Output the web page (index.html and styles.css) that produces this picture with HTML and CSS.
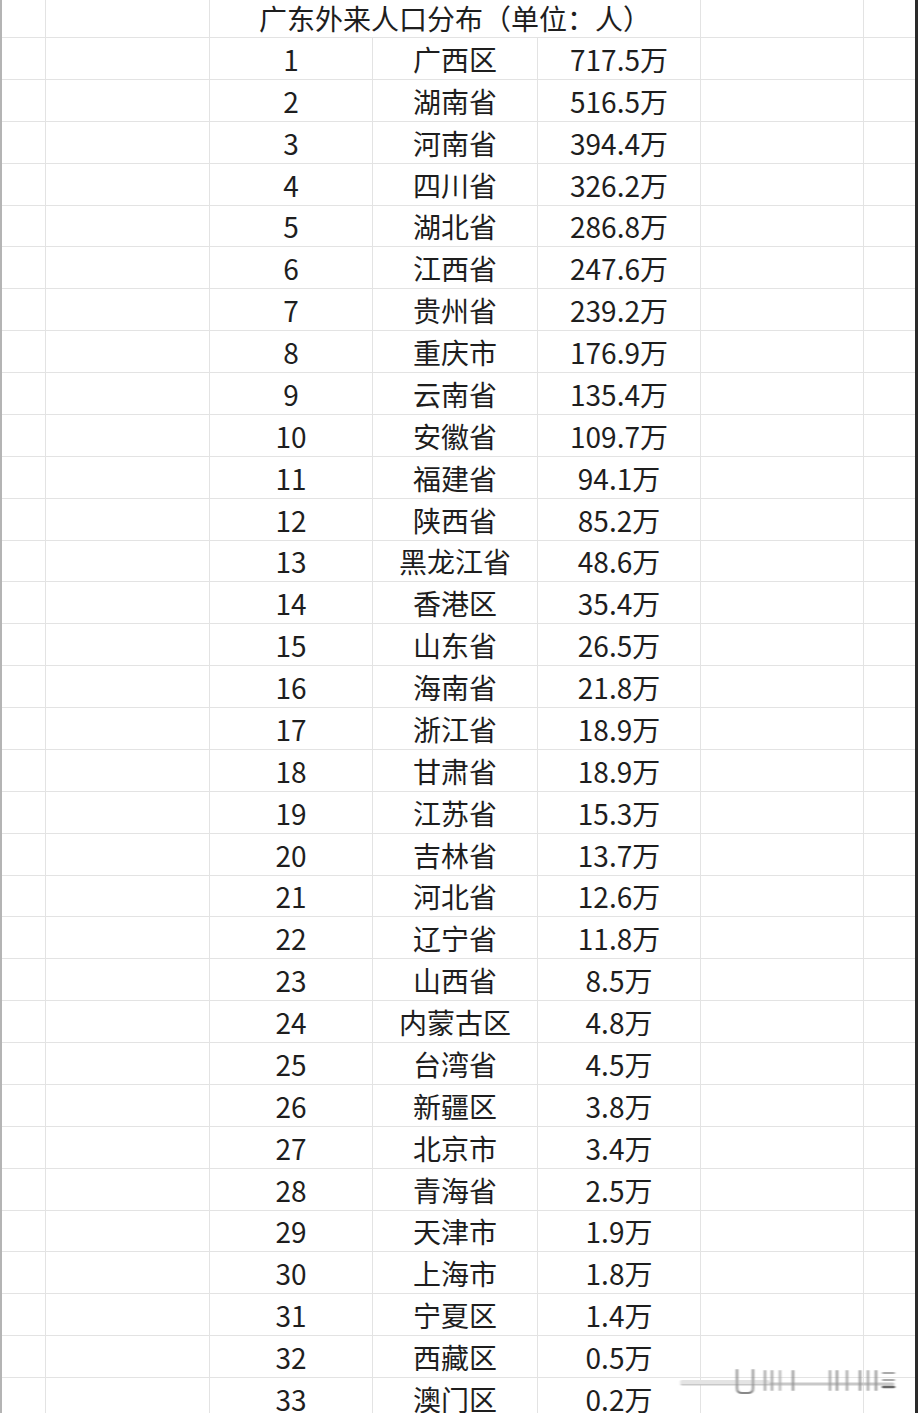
FILE: index.html
```html
<!DOCTYPE html>
<html lang="zh">
<head>
<meta charset="utf-8">
<title>广东外来人口分布</title>
<link rel="stylesheet" href="styles.css">
</head>
<body>
<div class="page">
  <div class="sheet">
    <div class="row title-row">
      <div class="cell"></div>
      <div class="cell"></div>
      <div class="cell title">广东外来人口分布（单位：人）</div>
      <div class="cell"></div>
      <div class="cell last"></div>
    </div>
    <div class="row"><div class="cell"></div><div class="cell"></div><div class="cell">1</div><div class="cell">广西区</div><div class="cell">717.5万</div><div class="cell"></div><div class="cell last"></div></div>
    <div class="row"><div class="cell"></div><div class="cell"></div><div class="cell">2</div><div class="cell">湖南省</div><div class="cell">516.5万</div><div class="cell"></div><div class="cell last"></div></div>
    <div class="row"><div class="cell"></div><div class="cell"></div><div class="cell">3</div><div class="cell">河南省</div><div class="cell">394.4万</div><div class="cell"></div><div class="cell last"></div></div>
    <div class="row"><div class="cell"></div><div class="cell"></div><div class="cell">4</div><div class="cell">四川省</div><div class="cell">326.2万</div><div class="cell"></div><div class="cell last"></div></div>
    <div class="row"><div class="cell"></div><div class="cell"></div><div class="cell">5</div><div class="cell">湖北省</div><div class="cell">286.8万</div><div class="cell"></div><div class="cell last"></div></div>
    <div class="row"><div class="cell"></div><div class="cell"></div><div class="cell">6</div><div class="cell">江西省</div><div class="cell">247.6万</div><div class="cell"></div><div class="cell last"></div></div>
    <div class="row"><div class="cell"></div><div class="cell"></div><div class="cell">7</div><div class="cell">贵州省</div><div class="cell">239.2万</div><div class="cell"></div><div class="cell last"></div></div>
    <div class="row"><div class="cell"></div><div class="cell"></div><div class="cell">8</div><div class="cell">重庆市</div><div class="cell">176.9万</div><div class="cell"></div><div class="cell last"></div></div>
    <div class="row"><div class="cell"></div><div class="cell"></div><div class="cell">9</div><div class="cell">云南省</div><div class="cell">135.4万</div><div class="cell"></div><div class="cell last"></div></div>
    <div class="row"><div class="cell"></div><div class="cell"></div><div class="cell">10</div><div class="cell">安徽省</div><div class="cell">109.7万</div><div class="cell"></div><div class="cell last"></div></div>
    <div class="row"><div class="cell"></div><div class="cell"></div><div class="cell">11</div><div class="cell">福建省</div><div class="cell">94.1万</div><div class="cell"></div><div class="cell last"></div></div>
    <div class="row"><div class="cell"></div><div class="cell"></div><div class="cell">12</div><div class="cell">陕西省</div><div class="cell">85.2万</div><div class="cell"></div><div class="cell last"></div></div>
    <div class="row"><div class="cell"></div><div class="cell"></div><div class="cell">13</div><div class="cell">黑龙江省</div><div class="cell">48.6万</div><div class="cell"></div><div class="cell last"></div></div>
    <div class="row"><div class="cell"></div><div class="cell"></div><div class="cell">14</div><div class="cell">香港区</div><div class="cell">35.4万</div><div class="cell"></div><div class="cell last"></div></div>
    <div class="row"><div class="cell"></div><div class="cell"></div><div class="cell">15</div><div class="cell">山东省</div><div class="cell">26.5万</div><div class="cell"></div><div class="cell last"></div></div>
    <div class="row"><div class="cell"></div><div class="cell"></div><div class="cell">16</div><div class="cell">海南省</div><div class="cell">21.8万</div><div class="cell"></div><div class="cell last"></div></div>
    <div class="row"><div class="cell"></div><div class="cell"></div><div class="cell">17</div><div class="cell">浙江省</div><div class="cell">18.9万</div><div class="cell"></div><div class="cell last"></div></div>
    <div class="row"><div class="cell"></div><div class="cell"></div><div class="cell">18</div><div class="cell">甘肃省</div><div class="cell">18.9万</div><div class="cell"></div><div class="cell last"></div></div>
    <div class="row"><div class="cell"></div><div class="cell"></div><div class="cell">19</div><div class="cell">江苏省</div><div class="cell">15.3万</div><div class="cell"></div><div class="cell last"></div></div>
    <div class="row"><div class="cell"></div><div class="cell"></div><div class="cell">20</div><div class="cell">吉林省</div><div class="cell">13.7万</div><div class="cell"></div><div class="cell last"></div></div>
    <div class="row"><div class="cell"></div><div class="cell"></div><div class="cell">21</div><div class="cell">河北省</div><div class="cell">12.6万</div><div class="cell"></div><div class="cell last"></div></div>
    <div class="row"><div class="cell"></div><div class="cell"></div><div class="cell">22</div><div class="cell">辽宁省</div><div class="cell">11.8万</div><div class="cell"></div><div class="cell last"></div></div>
    <div class="row"><div class="cell"></div><div class="cell"></div><div class="cell">23</div><div class="cell">山西省</div><div class="cell">8.5万</div><div class="cell"></div><div class="cell last"></div></div>
    <div class="row"><div class="cell"></div><div class="cell"></div><div class="cell">24</div><div class="cell">内蒙古区</div><div class="cell">4.8万</div><div class="cell"></div><div class="cell last"></div></div>
    <div class="row"><div class="cell"></div><div class="cell"></div><div class="cell">25</div><div class="cell">台湾省</div><div class="cell">4.5万</div><div class="cell"></div><div class="cell last"></div></div>
    <div class="row"><div class="cell"></div><div class="cell"></div><div class="cell">26</div><div class="cell">新疆区</div><div class="cell">3.8万</div><div class="cell"></div><div class="cell last"></div></div>
    <div class="row"><div class="cell"></div><div class="cell"></div><div class="cell">27</div><div class="cell">北京市</div><div class="cell">3.4万</div><div class="cell"></div><div class="cell last"></div></div>
    <div class="row"><div class="cell"></div><div class="cell"></div><div class="cell">28</div><div class="cell">青海省</div><div class="cell">2.5万</div><div class="cell"></div><div class="cell last"></div></div>
    <div class="row"><div class="cell"></div><div class="cell"></div><div class="cell">29</div><div class="cell">天津市</div><div class="cell">1.9万</div><div class="cell"></div><div class="cell last"></div></div>
    <div class="row"><div class="cell"></div><div class="cell"></div><div class="cell">30</div><div class="cell">上海市</div><div class="cell">1.8万</div><div class="cell"></div><div class="cell last"></div></div>
    <div class="row"><div class="cell"></div><div class="cell"></div><div class="cell">31</div><div class="cell">宁夏区</div><div class="cell">1.4万</div><div class="cell"></div><div class="cell last"></div></div>
    <div class="row"><div class="cell"></div><div class="cell"></div><div class="cell">32</div><div class="cell">西藏区</div><div class="cell">0.5万</div><div class="cell"></div><div class="cell last"></div></div>
    <div class="row"><div class="cell"></div><div class="cell"></div><div class="cell">33</div><div class="cell">澳门区</div><div class="cell">0.2万</div><div class="cell"></div><div class="cell last"></div></div>
  </div>
  <svg class="watermark" width="230" height="34" viewBox="0 0 230 34" xmlns="http://www.w3.org/2000/svg">
    <defs>
      <filter id="blur" x="-10%" y="-50%" width="120%" height="200%">
        <feGaussianBlur stdDeviation="1.2 0.7"/>
      </filter>
    </defs>
    <g filter="url(#blur)" stroke-linecap="round" fill="none">
      <line x1="4" y1="18" x2="215" y2="18" stroke="#c8c8c8" stroke-width="3"/>
      <line x1="4" y1="16" x2="90" y2="16" stroke="#e4e4e4" stroke-width="4"/>
      <path d="M59 4 V22 Q59 27 64 27 H70 Q75 27 75 22 V4" stroke="#888" stroke-width="2"/>
      <line x1="87" y1="5" x2="87" y2="24" stroke="#999" stroke-width="2"/>
      <line x1="94" y1="5" x2="94" y2="24" stroke="#999" stroke-width="2"/>
      <line x1="102" y1="5" x2="102" y2="24" stroke="#aaa" stroke-width="2"/>
      <line x1="115" y1="5" x2="115" y2="24" stroke="#888" stroke-width="2"/>
      <line x1="152" y1="5" x2="152" y2="24" stroke="#999" stroke-width="2"/>
      <line x1="159" y1="5" x2="159" y2="24" stroke="#888" stroke-width="2"/>
      <line x1="169" y1="5" x2="169" y2="24" stroke="#999" stroke-width="2"/>
      <line x1="182" y1="5" x2="182" y2="24" stroke="#888" stroke-width="2"/>
      <line x1="190" y1="5" x2="190" y2="24" stroke="#999" stroke-width="2"/>
      <line x1="198" y1="5" x2="198" y2="24" stroke="#888" stroke-width="2"/>
      <line x1="205" y1="7" x2="216" y2="7" stroke="#aaa" stroke-width="2"/>
      <line x1="205" y1="14" x2="216" y2="14" stroke="#aaa" stroke-width="2"/>
      <line x1="205" y1="21" x2="216" y2="21" stroke="#666" stroke-width="2.5"/>
    </g>
  </svg>
</div>
</body>
</html>
```

FILE: styles.css
```css
* {
  box-sizing: border-box;
}

html, body {
  margin: 0;
  padding: 0;
  background: #ffffff;
}

.page {
  position: relative;
  width: 918px;
  height: 1413px;
  overflow: hidden;
  background: #ffffff;
  border-left: 2px solid #b4b4b4;
  border-right: 3px solid #2a2a2a;
  font-family: "Noto Sans CJK SC", "Noto Sans", sans-serif;
  color: #1e1e1e;
  font-size: 28px;
}

.sheet {
  display: flex;
  flex-direction: column;
}

.row {
  display: grid;
  grid-template-columns: 44px 164px 163px 165px 163px 163px 51px;
  height: 41.875px;
  border-bottom: 1px solid #e3e3e3;
}

.title-row {
  grid-template-columns: 44px 164px 491px 163px 51px;
  height: 38px;
}

.cell {
  display: flex;
  align-items: center;
  justify-content: center;
  border-right: 1px solid #e3e3e3;
  white-space: nowrap;
  line-height: 1;
  padding-top: 1px;
}

.cell.last {
  border-right: none;
}

.title {
  padding-top: 0;
  padding-bottom: 2px;
}

.watermark {
  position: absolute;
  left: 676px;
  top: 1366px;
}
```
